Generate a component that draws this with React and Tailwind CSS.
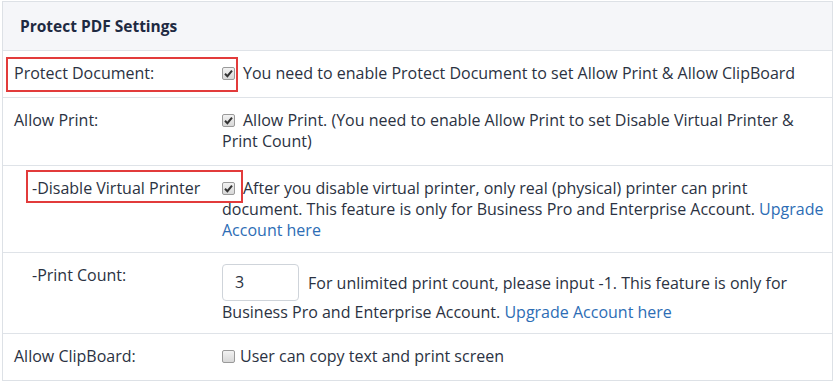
import React from "react";

function Box({ checked }) {
  return (
    <span className="inline-block align-[-1px] w-[13px] h-[13px] border border-[#9a9a9a] rounded-[2px] bg-gradient-to-b from-[#f2f2f2] to-[#d8d8d8] relative">
      {checked && (
        <svg viewBox="0 0 13 13" className="absolute -left-px -top-px w-[13px] h-[13px]">
          <path d="M3 6.8 L5.4 9.2 L10 3.6" fill="none" stroke="#333" strokeWidth="2" />
        </svg>
      )}
    </span>
  );
}

function Row({ label, indent, children, last, highlight, pad = "pt-3 pb-[13px]" }) {
  return (
    <div className={`relative flex pl-[11px] ${pad} ${last ? "" : "border-b border-[#dfe3e8]"}`}>
      <div className={`w-[208px] shrink-0 ${indent ? "pl-[18px]" : ""}`}>{label}</div>
      <div className="flex-1 pr-[2px]">{children}</div>
      {highlight}
    </div>
  );
}

const link = "text-[#2d6db5]";

export default function App() {
  return (
    <div className="w-[835px] h-[381px] bg-white pt-px pl-[2px] overflow-hidden">
      <div
        className="w-[831px] border border-[#dde1e6] text-[16px] leading-[21px] text-[#2b3242]"
        style={{ fontFamily: '"Open Sans", "Noto Sans", sans-serif' }}
      >
        <div className="h-[49px] bg-[#f5f6f9] border-b border-[#dfe3e8] flex items-center pl-[17px] text-[15.5px] font-bold text-[#1e2a42]">
          Protect PDF Settings
        </div>

        <Row
          label="Protect Document:"
          highlight={<div className="absolute left-[3px] top-[6px] w-[232px] h-[35px] border-2 border-[#e23b3b]" />}
        >
          <Box checked />
          <span className="ml-[8px]">You need to enable Protect Document to set Allow Print &amp; Allow ClipBoard</span>
        </Row>

        <Row label="Allow Print:">
          <Box checked />
          <span className="ml-[8px]">
            Allow Print. (You need to enable Allow Print to set Disable Virtual Printer &amp; Print Count)
          </span>
        </Row>

        <Row
          label="-Disable Virtual Printer"
          indent
          pad="pt-3 pb-[11px]"
          highlight={<div className="absolute left-[23px] top-[4px] w-[217px] h-[33px] border-2 border-[#e23b3b]" />}
        >
          <Box checked />
          <span className="ml-[8px]">
            After you disable virtual printer, only real (physical) printer can print document. This feature is only
            for Business Pro and Enterprise Account. <span className={link}>Upgrade Account here</span>
          </span>
        </Row>

        <Row label="-Print Count:" indent pad="pt-3 pb-[7px]">
          <div className="pt-[2px] leading-[28px]">
            <span className="inline-block align-middle -my-[4.5px] w-[77px] h-[37px] border border-[#cfd4da] rounded-[4px] pl-[12px] leading-[35px]">
              3
            </span>
            <span className="ml-[9px] align-middle">
              For unlimited print count, please input -1. This feature is only for Business Pro and Enterprise
              Account. <span className={link}>Upgrade Account here</span>
            </span>
          </div>
        </Row>

        <Row label="Allow ClipBoard:" last>
          <Box />
          <span className="ml-[5px]">User can copy text and print screen</span>
        </Row>
      </div>
    </div>
  );
}
